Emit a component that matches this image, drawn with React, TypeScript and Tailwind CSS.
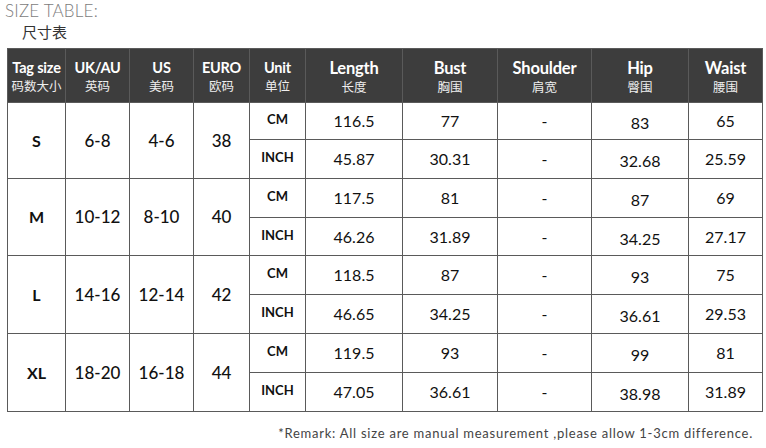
import React from "react";

const cols = [58, 64, 64, 56, 56, 97, 95, 94, 97, 74];

const headers: [string, string][] = [
  ["Tag size", "码数大小"],
  ["UK/AU", "英码"],
  ["US", "美码"],
  ["EURO", "欧码"],
  ["Unit", "单位"],
  ["Length", "长度"],
  ["Bust", "胸围"],
  ["Shoulder", "肩宽"],
  ["Hip", "臀围"],
  ["Waist", "腰围"],
];

type Group = {
  tag: string;
  uk: string;
  us: string;
  euro: string;
  h: [number, number];
  cm: string[];
  inch: string[];
};

const groups: Group[] = [
  { tag: "S", uk: "6-8", us: "4-6", euro: "38", h: [37, 39], cm: ["116.5", "77", "-", "83", "65"], inch: ["45.87", "30.31", "-", "32.68", "25.59"] },
  { tag: "M", uk: "10-12", us: "8-10", euro: "40", h: [39, 38], cm: ["117.5", "81", "-", "87", "69"], inch: ["46.26", "31.89", "-", "34.25", "27.17"] },
  { tag: "L", uk: "14-16", us: "12-14", euro: "42", h: [39, 39], cm: ["118.5", "87", "-", "93", "75"], inch: ["46.65", "34.25", "-", "36.61", "29.53"] },
  { tag: "XL", uk: "18-20", us: "16-18", euro: "44", h: [39, 39], cm: ["119.5", "93", "-", "99", "81"], inch: ["47.05", "36.61", "-", "38.98", "31.89"] },
];

const font = { fontFamily: "Lato, 'Noto Sans CJK SC', sans-serif" };
const cjk = { fontFamily: "'Noto Sans CJK SC', sans-serif" };

export default function App() {
  const cell = "border border-[#5a5a5a] text-center align-middle p-0";
  return (
    <div className="w-[766px] h-[448px] bg-white relative overflow-hidden" style={font}>
      <div className="pl-[5px] pt-[1px] text-[17px] leading-[20px] font-light text-[#7c7c7c] tracking-[0.2px]">SIZE TABLE:</div>
      <div className="pl-[22px] pt-[1px] text-[15px] leading-[19px] text-[#333]" style={cjk}>尺寸表</div>
      <table className="ml-[7px] mt-[7px] border-collapse table-fixed" style={{ width: 755 }}>
        <colgroup>
          {cols.map((w, i) => (
            <col key={i} style={{ width: w }} />
          ))}
        </colgroup>
        <thead>
          <tr className="h-[54px] bg-[#3d3d3d]">
            {headers.map(([en, zh], i) => (
              <th key={i} className={cell + " text-white font-normal"}>
                <div className="flex flex-col items-center">
                  <span className={(i < 5 ? "text-[14.5px] leading-[18px]" : "text-[16.5px] leading-[20px]") + " font-bold tracking-[-0.2px]"}>{en}</span>
                  <span className="text-[12.5px] leading-[15px] mt-[1px] text-[#eeeeee]" style={cjk}>{zh}</span>
                </div>
              </th>
            ))}
          </tr>
        </thead>
        <tbody className="text-[#111]">
          {groups.map((g) => (
            <React.Fragment key={g.tag}>
              <tr style={{ height: g.h[0] }}>
                <td rowSpan={2} className={cell + " text-[16px] font-bold"}>{g.tag}</td>
                <td rowSpan={2} className={cell + " text-[17px] font-medium"}>{g.uk}</td>
                <td rowSpan={2} className={cell + " text-[17px] font-medium"}>{g.us}</td>
                <td rowSpan={2} className={cell + " text-[17px] font-medium"}>{g.euro}</td>
                <td className={cell + " text-[13px] font-bold pb-[2px]"}>CM</td>
                {g.cm.map((v, i) => (
                  <td key={i} className={cell + " text-[16px] " + (i === 3 ? "pt-[4px]" : "")}>{v}</td>
                ))}
              </tr>
              <tr style={{ height: g.h[1] }}>
                <td className={cell + " text-[13px] font-bold pb-[2px]"}>INCH</td>
                {g.inch.map((v, i) => (
                  <td key={i} className={cell + " text-[16px] " + (i === 3 ? "pt-[4px]" : "")}>{v}</td>
                ))}
              </tr>
            </React.Fragment>
          ))}
        </tbody>
      </table>
      <div className="mt-[12px] pr-[13px] text-right text-[13px] text-[#444] tracking-[0.75px]">
        *Remark: All size are manual measurement ,please allow 1-3cm difference.
      </div>
    </div>
  );
}
